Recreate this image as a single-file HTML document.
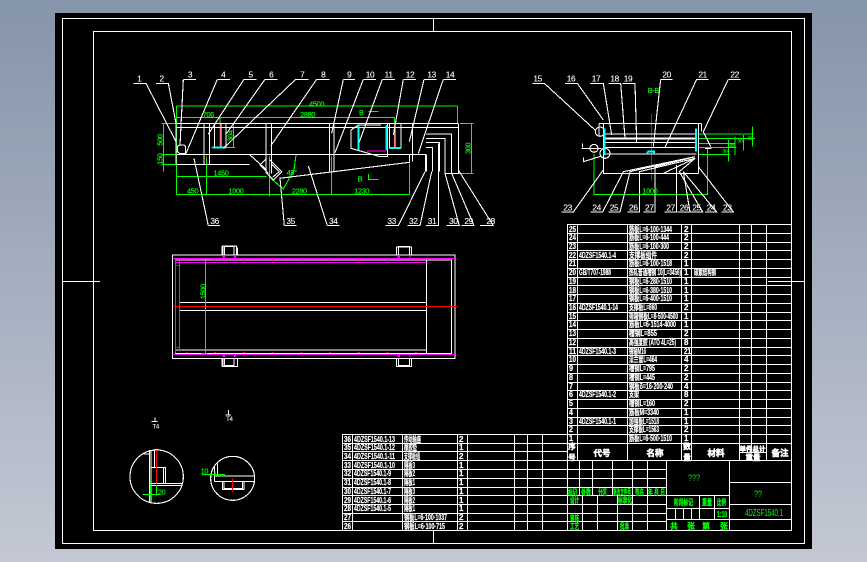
<!DOCTYPE html>
<html>
<head>
<meta charset="utf-8">
<style>
html,body{margin:0;padding:0;width:867px;height:562px;overflow:hidden;background:linear-gradient(to bottom,#8595aa,#c4c8d4)}
svg{position:absolute;left:0;top:0}
*{vector-effect:non-scaling-stroke}
path,rect,circle{fill:none;stroke-width:1;shape-rendering:crispEdges}
.s path,.s circle{stroke-width:1.1}
.w{stroke:#fff}.g{stroke:#0f0}.r{stroke:#f00}.m{stroke:#f0f}
.s .c,.c{stroke:#0ff;stroke-width:2}
.s .b,.b{stroke:#fff;stroke-width:2}
text{font-family:"Liberation Sans","Noto Sans CJK SC",sans-serif}
.n{font-size:25px;fill:#fff;text-anchor:middle;letter-spacing:-1px;stroke:#fff;stroke-width:.1}
.d{font-size:22px;fill:#0f0;text-anchor:middle;letter-spacing:-1px;stroke:#0f0;stroke-width:.15}
.t text{font-size:8px;fill:#fff;font-weight:bold;stroke:#fff;stroke-width:.2}
.e text{font-size:8px;fill:#0f0;font-weight:bold;stroke:#0f0;stroke-width:.3}
.h text{font-size:8.5px;fill:#fff;font-weight:bold;text-anchor:middle;stroke:#fff;stroke-width:.5}
</style>
</head>
<body>
<svg width="867" height="562" viewBox="0 0 867 562" xmlns="http://www.w3.org/2000/svg">
<rect x="55" y="13" width="757" height="536" style="fill:#000;stroke:none"/>
<path class="w" d="M62.5 18.5H804.5V543.5H62.5Z M93.5 31.5H791.5V530.5H93.5Z M62 281.5H100 M768 281.5H804 M433.5 18V31 M433.5 530V543"/>

<!-- side view -->
<g class="s" transform="translate(120 60) scale(.33333)">
<path class="g" d="M170 138H1012 M170 138V190 M1012 138V190 M170 172H823 M823 172V215 M300 172V190 M125 190H168 M1020 190H1060 M130 190V335 M125 283H170 M125 313H170 M1055 190V340 M1015 340H1060 M170 350H440 M170 190V403 M170 403H868 M260 285V403 M448 285V410 M634 285V403 M868 310V403 M340 190V262 M275 262H345 M528 285L522 330L490 387L452 355 M745 155H775 M745 342V358H775"/>
<path class="r" d="M300 190V262 M823 190V262 M260 283V292 M448 283V292 M634 283V292 M868 283V292"/>
<path class="w" d="M168 190H1015 M168 202H1015 M168 190V313 M168 283H918 M168 313H388 M388 283L440 330 M868 307L478 355 M868 283V307 M878 190V305 M252 190V313 M268 190V313 M438 190V340 M455 190V340 M628 190V338 M642 190V338 M283 190V262 M303 190V262 M318 190V262 M693 210L715 195H783 M693 210V265L780 290H803V190 M808 190V265 M825 190V265 M843 190V265 M918 222H995V340 M918 236H975V340 M918 248H958V335 M918 262H938V335 M1015 190V340 M975 340H1015 M440 295L420 315L445 340 M450 300L485 335L460 360L440 340 M455 312L478 335L458 352 M178 255H192L197 260V280H178L172 275V260Z"/>
<path class="b" d="M918 283V335"/>
<path class="c" d="M716 195V270 M800 195V270 M808 264H845 M278 263H318"/>
<path class="m" d="M740 273H800 M170 280V284"/>
<path class="w" d="M40 70H78L168 245 M108 70H145L168 190 M190 58H228 M190 58L180 255 M292 58H330M292 58L198 280 M372 58H410M372 58L265 222 M435 58H473M435 58L320 220 M527 58H565M527 58L310 265 M590 58H628M590 58L452 258 M670 58H705M670 58L635 220 M730 58H768M730 58L645 278 M787 58H825M787 58L717 248 M850 58H888M850 58L820 225 M912 58H950M912 58L868 245 M970 58H1008M970 58L895 280 M265 497H300M265 497L222 295 M493 497H530M493 497L480 355 M622 497H658M622 497L565 318 M797 497H835M835 497L915 335 M862 497H900M900 497L935 335 M918 497H955V250 M980 497H1018L975 340 M1025 497H1062L995 340 M1080 497H1120L1015 330"/>
<text class="n" x="58" y="64">1</text><text class="n" x="125" y="64">2</text><text class="n" x="210" y="52">3</text><text class="n" x="310" y="52">4</text><text class="n" x="392" y="52">5</text><text class="n" x="454" y="52">6</text><text class="n" x="547" y="52">7</text><text class="n" x="610" y="52">8</text><text class="n" x="688" y="52">9</text><text class="n" x="750" y="52">10</text><text class="n" x="806" y="52">11</text><text class="n" x="870" y="52">12</text><text class="n" x="935" y="52">13</text><text class="n" x="990" y="52">14</text>
<text class="n" x="284" y="492">36</text><text class="n" x="512" y="492">35</text><text class="n" x="640" y="492">34</text><text class="n" x="815" y="492">33</text><text class="n" x="880" y="492">32</text><text class="n" x="936" y="492">31</text><text class="n" x="1000" y="492">30</text><text class="n" x="1046" y="492">29</text><text class="n" x="1112" y="492">28</text>
<text class="d" x="590" y="139">4500</text><text class="d" x="563" y="171">2880</text><text class="d" x="265" y="171">706</text><text class="d" x="724" y="165">B</text><text class="d" x="720" y="365">B</text><text class="d" x="303" y="347">1450</text><text class="d" x="218" y="401">450</text><text class="d" x="348" y="401">1000</text><text class="d" x="538" y="401">2280</text><text class="d" x="725" y="401">1230</text><text class="d" x="515" y="345">49°</text>
<text class="d" transform="translate(128 240) rotate(-90)">500</text><text class="d" transform="translate(128 297) rotate(-90)">150</text><text class="d" transform="translate(1052 265) rotate(-90)">300</text><text class="d" transform="translate(338 228) rotate(-90)">304</text>
</g>

<!-- section B-B -->
<g class="s" transform="translate(520 60) scale(.33333)">
<path class="g" d="M222 282V403H562V262 M535 222H700 M535 236H705 M535 250H645 M535 262H650 M535 283H630 M698 200V260 M670 225V272 M645 230V285 M625 240V305"/>
<path class="r" d="M394 162V362 M222 265V275"/>
<path class="w" d="M237 190H545 M237 190V230 M250 190V340H535 M535 190V340 M545 190V215 M250 222H530 M250 248H530 M250 282H530 M250 262H530 M550 215L572 260 M555 265H575 M185 265H245 M188 250V262 M190 292V305L245 288"/>
<path class="b" d="M250 236H530"/>
<circle class="w" cx="222" cy="265" r="12"/><circle class="w" cx="255" cy="280" r="15"/><circle class="w" cx="240" cy="215" r="14"/>
<path class="c" d="M253 205V285 M382 275H405 M382 275V282 M402 275V282 M528 205V275"/>
<path class="w" d="M37 70H73L225 210 M135 70H172L250 180 M210 70H250L275 225 M265 70H302L315 235 M308 70H345L350 248 M422 58H458M422 58L400 260 M530 58H565M530 58L435 262 M625 58H662M625 58L550 215 M125 456H160L250 330 M212 456H248L310 335L525 290 M265 456H300L330 335L525 290 M322 456H358V335L525 295 M370 456H405V320L525 290 M433 456H470V315 M472 456H510L490 335 M512 456H548L478 335L525 295 M555 456H590L490 335 M605 456H640L535 320 M430 340L525 295"/>
<text class="n" x="53" y="64">15</text><text class="n" x="153" y="64">16</text><text class="n" x="228" y="64">17</text><text class="n" x="284" y="64">18</text><text class="n" x="324" y="64">19</text><text class="n" x="440" y="52">20</text><text class="n" x="548" y="52">21</text><text class="n" x="644" y="52">22</text>
<text class="n" x="143" y="451">23</text><text class="n" x="230" y="451">24</text><text class="n" x="282" y="451">25</text><text class="n" x="340" y="451">26</text><text class="n" x="388" y="451">27</text><text class="n" x="452" y="451">27</text><text class="n" x="492" y="451">26</text><text class="n" x="530" y="451">25</text><text class="n" x="573" y="451">24</text><text class="n" x="622" y="451">23</text>
<text class="d" x="400" y="99">B-B</text><text class="d" x="390" y="401">1000</text><text class="d" x="689" y="238" style="font-size:15px">30</text><text class="d" x="660" y="247" style="font-size:15px">30</text><text class="d" x="635" y="261" style="font-size:15px">30</text><text class="d" x="615" y="278" style="font-size:15px">30</text>
</g>

<!-- top view -->
<g transform="translate(160 245) scale(.33333)">
<path class="w" d="M37 30H885V340H37Z M47 45H875V325H47Z M800 45V325 M60 172H800 M60 196H800 M47 315H800 M187 30V3H230V30 M193 30V5H222V30 M232 8V30 M710 30V6H755V30 M716 30V5H748V30 M187 340V365H232V340 M193 340V362H222V340 M710 340V365H755V340 M716 340V362H748V340"/>
<path class="m" d="M37 40H885 M47 52H800 M37 328H885 M47 45V325 M58 45V320"/>
<path class="b" d="M187 3V30 M187 340V365"/>
<path class="m" style="stroke-width:2" d="M187 36H195 M222 36H228 M187 333H195 M222 333H228 M712 36H720 M748 36H752 M712 333H720 M748 333H752"/>
<path class="r" d="M40 184H893 M78 45V51 M165 45V51 M252 45V51 M338 45V51 M424 45V51 M510 45V51 M596 45V51 M682 45V51 M768 45V51 M78 322H82 M162 322H168 M248 322H255 M335 322H340 M421 322H427 M507 322H513 M592 322H600 M680 322H685 M765 322H771 M47 62H57 M47 307H57"/>
<path class="g" d="M136 43V325 M132 43H146 M125 325H142"/>
<text class="d" transform="translate(136 140) rotate(-90)">1500</text>
</g>

<!-- details -->
<g class="s" transform="translate(120 405) scale(.33333)">
<circle class="w" cx="110" cy="215" r="80"/><circle class="w" cx="338" cy="220" r="66"/>
<path class="w" d="M88 135V292 M93 135V292 M103 133H116 M104 135V187 M93 187H137V235 M131 187V235 M93 235H187 M93 241H187 M70 147H88 M283 213H404 M283 230H404 M283 183V230 M293 175V213 M308 230V254H372V230 M312 230V250H367V230 M105 38V50 M95 50H113 M325 15V30 M317 30H333"/>
<path class="r" d="M110 135V235 M338 220V260"/>
<path class="g" d="M92 230V285 M67 268H120 M110 240V272 M246 208H315 M285 200V215"/>
<text class="d" x="125" y="268">20</text><text class="d" x="253" y="206">10</text>
<text class="n" x="107" y="70" style="font-size:18px">T4</text><text class="n" x="328" y="48" style="font-size:18px">T4</text>
</g>

<!-- parts table right -->
<path class="w" d="M567.5 224V443 M577.5 224V460 M627.5 224V460 M681.5 224V460 M691.5 224V460 M739.5 224V460 M751.5 224V452 M766.5 224V460 M791.5 224V530
M567 224.5H791 M567 233.5H791 M567 242.5H791 M567 250.5H791 M567 259.5H791 M567 268.5H791 M567 277.5H791 M567 285.5H791 M567 294.5H791 M567 303.5H791 M567 312.5H791 M567 320.5H791 M567 329.5H791 M567 338.5H791 M567 347.5H791 M567 355.5H791 M567 364.5H791 M567 373.5H791 M567 382.5H791 M567 390.5H791 M567 399.5H791 M567 408.5H791 M567 417.5H791 M567 425.5H791 M567 434.5H791 M342 443.5H791 M739 452.5H766 M342 460.5H791"/>
<!-- parts table left -->
<path class="w" d="M342.5 434V530 M352.5 434V530 M402.5 434V530 M457.5 434V530 M467.5 434V530 M514.5 434V530 M527.5 434V530 M542.5 434V530 M567.5 434V530
M342 434.5H567 M342 451.5H567 M342 469.5H567 M342 478.5H567 M342 460.5H567 M342 487.5H567 M342 495.5H567 M342 504.5H567 M342 513.5H567 M342 521.5H567 M342 530.5H791"/>
<!-- title block -->
<path class="w" d="M567 469.5H666 M567 478.5H666 M567 487.5H666 M567 495.5H729 M567 504.5H666 M567 513.5H666 M567 521.5H666 M666 508.5H729 M666 519.5H791 M729 482.5H791 M729 504.5H791 M579.5 460V495 M592.5 460V495 M612.5 460V495 M632.5 460V530 M647.5 460V530 M582.5 495V530 M597.5 495V530 M617.5 495V530 M666.5 460V530 M729.5 460V530 M699.5 495V519 M714.5 495V519 M675.5 508V519 M683.5 508V519 M691.5 508V519"/>

<g class="t">
<text x="569" y="232" textLength="7" lengthAdjust="spacingAndGlyphs">25</text><text x="629" y="232" textLength="43" lengthAdjust="spacingAndGlyphs">筋板L=6·100·1344</text><text x="684" y="232">2</text>
<text x="569" y="240" textLength="7" lengthAdjust="spacingAndGlyphs">24</text><text x="629" y="240" textLength="40" lengthAdjust="spacingAndGlyphs">筋板L=6·100·444</text><text x="684" y="240">2</text>
<text x="569" y="249" textLength="7" lengthAdjust="spacingAndGlyphs">23</text><text x="629" y="249" textLength="40" lengthAdjust="spacingAndGlyphs">筋板L=6·100·300</text><text x="684" y="249">2</text>
<text x="569" y="258" textLength="7" lengthAdjust="spacingAndGlyphs">22</text><text x="579" y="258" textLength="37" lengthAdjust="spacingAndGlyphs">4DZSF1540.1-4</text><text x="629" y="258" textLength="28" lengthAdjust="spacingAndGlyphs">支撑板组件</text><text x="684" y="258">2</text>
<text x="569" y="266" textLength="7" lengthAdjust="spacingAndGlyphs">21</text><text x="629" y="266" textLength="43" lengthAdjust="spacingAndGlyphs">筋板L=6·100·1518</text><text x="684" y="266">1</text>
<text x="569" y="275" textLength="7" lengthAdjust="spacingAndGlyphs">20</text><text x="579" y="275" textLength="32" lengthAdjust="spacingAndGlyphs">GB/T707-1988</text><text x="629" y="275" textLength="52" lengthAdjust="spacingAndGlyphs">热轧普通槽钢 10(L=3456)</text><text x="684" y="275">1</text><text x="694" y="275" textLength="22" lengthAdjust="spacingAndGlyphs">碳素结构钢</text>
<text x="569" y="284" textLength="7" lengthAdjust="spacingAndGlyphs">19</text><text x="629" y="284" textLength="43" lengthAdjust="spacingAndGlyphs">钢板L=6·280·1510</text><text x="684" y="284">1</text>
<text x="569" y="293" textLength="7" lengthAdjust="spacingAndGlyphs">18</text><text x="629" y="293" textLength="43" lengthAdjust="spacingAndGlyphs">钢板L=6·380·1510</text><text x="684" y="293">1</text>
<text x="569" y="301" textLength="7" lengthAdjust="spacingAndGlyphs">17</text><text x="629" y="301" textLength="43" lengthAdjust="spacingAndGlyphs">钢板L=6·400·1510</text><text x="684" y="301">1</text>
<text x="569" y="310" textLength="7" lengthAdjust="spacingAndGlyphs">16</text><text x="579" y="310" textLength="39" lengthAdjust="spacingAndGlyphs">4DZSF1540.1-14</text><text x="629" y="310" textLength="28" lengthAdjust="spacingAndGlyphs">支撑板L=860</text><text x="684" y="310">2</text>
<text x="569" y="319" textLength="7" lengthAdjust="spacingAndGlyphs">15</text><text x="629" y="319" textLength="49" lengthAdjust="spacingAndGlyphs">筛箱侧板L=8·500·4500</text><text x="684" y="319">1</text>
<text x="569" y="327" textLength="7" lengthAdjust="spacingAndGlyphs">14</text><text x="629" y="327" textLength="47" lengthAdjust="spacingAndGlyphs">筋板L=6·1514·4000</text><text x="684" y="327">1</text>
<text x="569" y="336" textLength="7" lengthAdjust="spacingAndGlyphs">13</text><text x="629" y="336" textLength="28" lengthAdjust="spacingAndGlyphs">槽钢L=855</text><text x="684" y="336">2</text>
<text x="569" y="345" textLength="7" lengthAdjust="spacingAndGlyphs">12</text><text x="629" y="345" textLength="47" lengthAdjust="spacingAndGlyphs">高强度胶 (ATO 4L=25)</text><text x="684" y="345">8</text>
<text x="569" y="354" textLength="7" lengthAdjust="spacingAndGlyphs">11</text><text x="579" y="354" textLength="37" lengthAdjust="spacingAndGlyphs">4DZSF1540.1-3</text><text x="629" y="354" textLength="17" lengthAdjust="spacingAndGlyphs">销轴M16</text><text x="684" y="354" textLength="7" lengthAdjust="spacingAndGlyphs">21</text>
<text x="569" y="362" textLength="7" lengthAdjust="spacingAndGlyphs">10</text><text x="629" y="362" textLength="28" lengthAdjust="spacingAndGlyphs">法兰管L=464</text><text x="684" y="362">4</text>
<text x="569" y="371" textLength="4" lengthAdjust="spacingAndGlyphs">9</text><text x="629" y="371" textLength="26" lengthAdjust="spacingAndGlyphs">槽钢L=795</text><text x="684" y="371">2</text>
<text x="569" y="380" textLength="4" lengthAdjust="spacingAndGlyphs">8</text><text x="629" y="380" textLength="26" lengthAdjust="spacingAndGlyphs">槽钢L=445</text><text x="684" y="380">2</text>
<text x="569" y="389" textLength="4" lengthAdjust="spacingAndGlyphs">7</text><text x="629" y="389" textLength="44" lengthAdjust="spacingAndGlyphs">钢板δ=16·200·240</text><text x="684" y="389">4</text>
<text x="569" y="397" textLength="4" lengthAdjust="spacingAndGlyphs">6</text><text x="579" y="397" textLength="37" lengthAdjust="spacingAndGlyphs">4DZSF1540.1-2</text><text x="629" y="397" textLength="10" lengthAdjust="spacingAndGlyphs">支架</text><text x="684" y="397">8</text>
<text x="569" y="406" textLength="4" lengthAdjust="spacingAndGlyphs">5</text><text x="629" y="406" textLength="26" lengthAdjust="spacingAndGlyphs">槽钢L=160</text><text x="684" y="406">2</text>
<text x="569" y="415" textLength="4" lengthAdjust="spacingAndGlyphs">4</text><text x="629" y="415" textLength="30" lengthAdjust="spacingAndGlyphs">筋板M=3340</text><text x="684" y="415">1</text>
<text x="569" y="424" textLength="4" lengthAdjust="spacingAndGlyphs">3</text><text x="579" y="424" textLength="37" lengthAdjust="spacingAndGlyphs">4DZSF1540.1-1</text><text x="629" y="424" textLength="30" lengthAdjust="spacingAndGlyphs">加强板L=1518</text><text x="684" y="424">1</text>
<text x="569" y="432" textLength="4" lengthAdjust="spacingAndGlyphs">2</text><text x="629" y="432" textLength="30" lengthAdjust="spacingAndGlyphs">支撑板L=1563</text><text x="684" y="432">2</text>
<text x="569" y="441" textLength="4" lengthAdjust="spacingAndGlyphs">1</text><text x="629" y="441" textLength="43" lengthAdjust="spacingAndGlyphs">筋板L=6·500·1510</text><text x="684" y="441">1</text>

<text x="344" y="442" textLength="7" lengthAdjust="spacingAndGlyphs">36</text><text x="354" y="442" textLength="41" lengthAdjust="spacingAndGlyphs">4DZSF1540.1-13</text><text x="404" y="442" textLength="17" lengthAdjust="spacingAndGlyphs">传动轴座</text><text x="459" y="442">2</text>
<text x="344" y="450" textLength="7" lengthAdjust="spacingAndGlyphs">35</text><text x="354" y="450" textLength="41" lengthAdjust="spacingAndGlyphs">4DZSF1540.1-12</text><text x="404" y="450" textLength="13" lengthAdjust="spacingAndGlyphs">橡胶垫</text><text x="459" y="450">1</text>
<text x="344" y="459" textLength="7" lengthAdjust="spacingAndGlyphs">34</text><text x="354" y="459" textLength="41" lengthAdjust="spacingAndGlyphs">4DZSF1540.1-11</text><text x="404" y="459" textLength="16" lengthAdjust="spacingAndGlyphs">支撑板组</text><text x="459" y="459">2</text>
<text x="344" y="468" textLength="7" lengthAdjust="spacingAndGlyphs">33</text><text x="354" y="468" textLength="41" lengthAdjust="spacingAndGlyphs">4DZSF1540.1-10</text><text x="404" y="468" textLength="11" lengthAdjust="spacingAndGlyphs">隔板3</text><text x="459" y="468">1</text>
<text x="344" y="476" textLength="7" lengthAdjust="spacingAndGlyphs">32</text><text x="354" y="476" textLength="37" lengthAdjust="spacingAndGlyphs">4DZSF1540.1-9</text><text x="404" y="476" textLength="11" lengthAdjust="spacingAndGlyphs">隔板2</text><text x="459" y="476">1</text>
<text x="344" y="485" textLength="7" lengthAdjust="spacingAndGlyphs">31</text><text x="354" y="485" textLength="37" lengthAdjust="spacingAndGlyphs">4DZSF1540.1-8</text><text x="404" y="485" textLength="11" lengthAdjust="spacingAndGlyphs">隔板1</text><text x="459" y="485">1</text>
<text x="344" y="494" textLength="7" lengthAdjust="spacingAndGlyphs">30</text><text x="354" y="494" textLength="37" lengthAdjust="spacingAndGlyphs">4DZSF1540.1-7</text><text x="404" y="494" textLength="11" lengthAdjust="spacingAndGlyphs">隔板3</text><text x="459" y="494">1</text>
<text x="344" y="503" textLength="7" lengthAdjust="spacingAndGlyphs">29</text><text x="354" y="503" textLength="37" lengthAdjust="spacingAndGlyphs">4DZSF1540.1-6</text><text x="404" y="503" textLength="11" lengthAdjust="spacingAndGlyphs">隔板2</text><text x="459" y="503">1</text>
<text x="344" y="511" textLength="7" lengthAdjust="spacingAndGlyphs">28</text><text x="354" y="511" textLength="37" lengthAdjust="spacingAndGlyphs">4DZSF1540.1-5</text><text x="404" y="511" textLength="11" lengthAdjust="spacingAndGlyphs">隔板1</text><text x="459" y="511">1</text>
<text x="344" y="520" textLength="7" lengthAdjust="spacingAndGlyphs">27</text><text x="404" y="520" textLength="43" lengthAdjust="spacingAndGlyphs">钢板L=6·100·1037</text><text x="459" y="520">2</text>
<text x="344" y="529" textLength="7" lengthAdjust="spacingAndGlyphs">26</text><text x="404" y="529" textLength="41" lengthAdjust="spacingAndGlyphs">钢板L=6·100·715</text><text x="459" y="529">2</text>
</g>

<g class="h">
<text x="572" y="449" style="font-size:7.5px">序</text><text x="572" y="460" style="font-size:7.5px">号</text>
<text x="602" y="456">代号</text><text x="655" y="456">名称</text>
<text x="687" y="449" style="font-size:7.5px">数</text><text x="687" y="460" style="font-size:7.5px">量</text>
<text x="716" y="456">材料</text><text x="746" y="451" style="font-size:6.5px">单件</text><text x="759" y="451" style="font-size:6.5px">总计</text><text x="753" y="460" style="font-size:7.5px">重量</text><text x="780" y="456">备注</text>
</g>

<g class="e">
<text x="568" y="495" textLength="9" lengthAdjust="spacingAndGlyphs">标记</text><text x="581" y="495" textLength="10" lengthAdjust="spacingAndGlyphs">处数</text><text x="598" y="495" textLength="9" lengthAdjust="spacingAndGlyphs">分区</text><text x="613" y="495" textLength="18" lengthAdjust="spacingAndGlyphs">更改文件号</text><text x="635" y="495" textLength="9" lengthAdjust="spacingAndGlyphs">签名</text><text x="648" y="495" textLength="17" lengthAdjust="spacingAndGlyphs">年 月 日</text>
<text x="570" y="503" textLength="9" lengthAdjust="spacingAndGlyphs">设计</text><text x="618" y="503" textLength="14" lengthAdjust="spacingAndGlyphs">标准化</text>
<text x="570" y="521" textLength="9" lengthAdjust="spacingAndGlyphs">审核</text><text x="570" y="529" textLength="9" lengthAdjust="spacingAndGlyphs">工艺</text><text x="620" y="529" textLength="9" lengthAdjust="spacingAndGlyphs">批准</text>
<text x="674" y="505" textLength="19" lengthAdjust="spacingAndGlyphs">阶段标记</text><text x="702" y="505" textLength="10" lengthAdjust="spacingAndGlyphs">重量</text><text x="717" y="505" textLength="9" lengthAdjust="spacingAndGlyphs">比例</text>
<text x="717" y="517" textLength="10" lengthAdjust="spacingAndGlyphs">1:10</text>
<text x="670" y="529">共</text><text x="687" y="529">张</text><text x="702" y="529">第</text><text x="720" y="529">张</text>
<text x="688" y="481" style="font-size:9px;font-weight:normal;stroke-width:0" textLength="12" lengthAdjust="spacingAndGlyphs">???</text>
<text x="754" y="497" style="font-size:9px;font-weight:normal;stroke-width:0" textLength="8" lengthAdjust="spacingAndGlyphs">??</text>
<text x="745" y="516" style="font-size:10px;font-weight:normal;stroke-width:0" textLength="38" lengthAdjust="spacingAndGlyphs">4DZSF1540.1</text>
</g>
</svg>
</body>
</html>
